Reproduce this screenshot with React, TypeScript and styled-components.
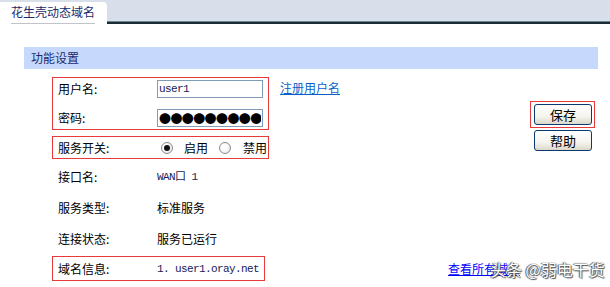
import React from "react";
import styled, { createGlobalStyle } from "styled-components";

const GlobalStyle = createGlobalStyle`
  html, body {
    margin: 0;
    padding: 0;
    background: #fff;
  }
  body {
    font-family: "Noto Sans CJK SC", "Liberation Sans", sans-serif;
    font-size: 12px;
    color: #000;
  }
`;

const Page = styled.div`
  position: relative;
  width: 610px;
  height: 287px;
  overflow: hidden;
`;

const TabBar = styled.div`
  height: 22px;
  background: #d8dfeb;
  border-bottom: 2px solid #1b2c35;
  box-shadow: inset 0 -1px 0 #6a8494;
  display: flex;
  align-items: flex-end;
`;

const Tab = styled.div`
  width: 107px;
  height: 22px;
  margin-bottom: -2px;
  box-sizing: border-box;
  padding: 3px 12px 0 11px;
  background: #fff;
  border-radius: 0 4px 0 0;
  color: #1b2a6b;
  line-height: 14px;
`;

const TabLabel = styled.span`
  display: block;
  padding-bottom: 4px;
  border-bottom: 1px solid #c0c5ca;
  white-space: nowrap;
`;

const SectionHeader = styled.div`
  margin: 23px 12px 0 24px;
  height: 22px;
  padding-left: 7px;
  background: #c6d9fd;
  color: #1b2a6b;
  line-height: 22px;
`;

const Main = styled.div`
  display: flex;
  padding: 8px 15px 0 52px;
`;

const Form = styled.div`
  display: flex;
  flex-direction: column;
`;

const Strip = styled.div`
  display: flex;
  align-items: flex-start;
`;

const Frame = styled.div<{ $marked?: boolean; $w: number; $top?: number }>`
  width: ${(p) => p.$w}px;
  margin-top: ${(p) => p.$top ?? 0}px;
  box-sizing: border-box;
  padding: 2px 4px 2px 5px;
  border: 1px solid ${(p) => (p.$marked ? "#e8393b" : "transparent")};
  display: flex;
  flex-direction: column;
  gap: 11px;
`;

const Line = styled.div<{ $h: number }>`
  height: ${(p) => p.$h}px;
  display: grid;
  grid-template-columns: 99px auto;
  align-items: center;
  white-space: nowrap;
  line-height: 14px;
`;

const Mono = styled.span`
  font-family: "Liberation Mono", "Noto Sans CJK SC", monospace;
  font-size: 11px;
  letter-spacing: -0.6px;
  color: #162058;
`;

const TextInput = styled.input`
  width: 106px;
  height: 18px;
  box-sizing: border-box;
  margin: 0;
  padding: 0 1px;
  border: 1px solid #7f9db9;
  outline: none;
  font-family: "Liberation Mono", monospace;
  font-size: 11px;
  letter-spacing: -0.6px;
  color: #162058;
`;

const SecretInput = styled(TextInput)`
  font-family: "Noto Sans CJK SC", sans-serif;
  font-size: 12px;
  letter-spacing: -0.6px;
  color: #000;
`;

const TextLink = styled.a<{ $tone: string; $left: number; $top?: number }>`
  margin: ${(p) => p.$top ?? 0}px 0 0 ${(p) => p.$left}px;
  color: ${(p) => p.$tone};
  text-decoration: underline;
  line-height: 14px;
  white-space: nowrap;
  cursor: pointer;
`;

const RadioGroup = styled.div`
  display: flex;
  align-items: center;
  padding-left: 4px;
`;

const Radio = styled.span<{ $on?: boolean; $gap?: number }>`
  width: 12px;
  height: 12px;
  margin-left: ${(p) => p.$gap ?? 0}px;
  box-sizing: border-box;
  border: 1px solid #8c8c8c;
  border-radius: 50%;
  background: radial-gradient(circle at 40% 40%, #fff 30%, #dedede);
  display: grid;
  place-items: center;
  &::after {
    content: "";
    width: 6px;
    height: 6px;
    border-radius: 50%;
    background: ${(p) => (p.$on ? "#111" : "transparent")};
  }
`;

const RadioText = styled.span<{ $gap: number }>`
  margin-left: ${(p) => p.$gap}px;
`;

const Aside = styled.div`
  margin: 24px 0 0 auto;
  display: flex;
  flex-direction: column;
  align-items: flex-start;
`;

const Marker = styled.div`
  padding: 2px 2px 2px 3px;
  border: 1px solid #e8393b;
`;

const Button = styled.button<{ $shift?: number; $top?: number }>`
  width: 58px;
  height: 21px;
  margin: ${(p) => p.$top ?? 0}px 0 0 ${(p) => p.$shift ?? 0}px;
  padding: 0;
  border: 1px solid #0b3a72;
  border-radius: 3px;
  background: linear-gradient(#ffffff, #f5f4ef 60%, #dcd8c9);
  font-family: "Noto Sans CJK SC", sans-serif;
  font-size: 13px;
  line-height: 17px;
  color: #000;
`;

const Watermark = styled.div`
  position: absolute;
  left: 490px;
  top: 259px;
  font-family: "Noto Sans CJK SC", sans-serif;
  font-size: 16px;
  line-height: 20px;
  color: #fff;
  white-space: nowrap;
  text-shadow: 0 0 1px #333, 1px 1px 1px #555, -1px 0 1px #555;
`;

export default function App() {
  return (
    <Page>
      <GlobalStyle />
      <TabBar>
        <Tab>
          <TabLabel>花生壳动态域名</TabLabel>
        </Tab>
      </TabBar>
      <SectionHeader>功能设置</SectionHeader>
      <Main>
        <Form>
          <Strip>
            <Frame $marked $w={217}>
              <Line $h={18}>
                <span>用户名:</span>
                <TextInput readOnly value="user1" />
              </Line>
              <Line $h={18}>
                <span>密码:</span>
                <SecretInput readOnly value="●●●●●●●●●●" />
              </Line>
            </Frame>
            <TextLink $tone="#0a5fc8" $left={11} $top={4}>
              注册用户名
            </TextLink>
          </Strip>
          <Frame $marked $w={217} $top={6}>
            <Line $h={17}>
              <span>服务开关:</span>
              <RadioGroup>
                <Radio $on />
                <RadioText $gap={11}>启用</RadioText>
                <Radio $gap={11} />
                <RadioText $gap={12}>禁用</RadioText>
              </RadioGroup>
            </Line>
          </Frame>
          <Frame $w={217} $top={2}>
            <Line $h={25}>
              <span>接口名:</span>
              <Mono>WAN口 1</Mono>
            </Line>
          </Frame>
          <Frame $w={217}>
            <Line $h={25}>
              <span>服务类型:</span>
              <span>标准服务</span>
            </Line>
          </Frame>
          <Frame $w={217}>
            <Line $h={25}>
              <span>连接状态:</span>
              <span>服务已运行</span>
            </Line>
          </Frame>
          <Strip>
            <Frame $marked $w={213} $top={2}>
              <Line $h={19}>
                <span>域名信息:</span>
                <Mono>1. user1.oray.net</Mono>
              </Line>
            </Frame>
            <TextLink $tone="#0000ff" $left={183} $top={8}>
              查看所有域名
            </TextLink>
          </Strip>
        </Form>
        <Aside>
          <Marker>
            <Button>保存</Button>
          </Marker>
          <Button $shift={4} $top={2}>
            帮助
          </Button>
        </Aside>
      </Main>
      <Watermark>头条 @弱电干货</Watermark>
    </Page>
  );
}
